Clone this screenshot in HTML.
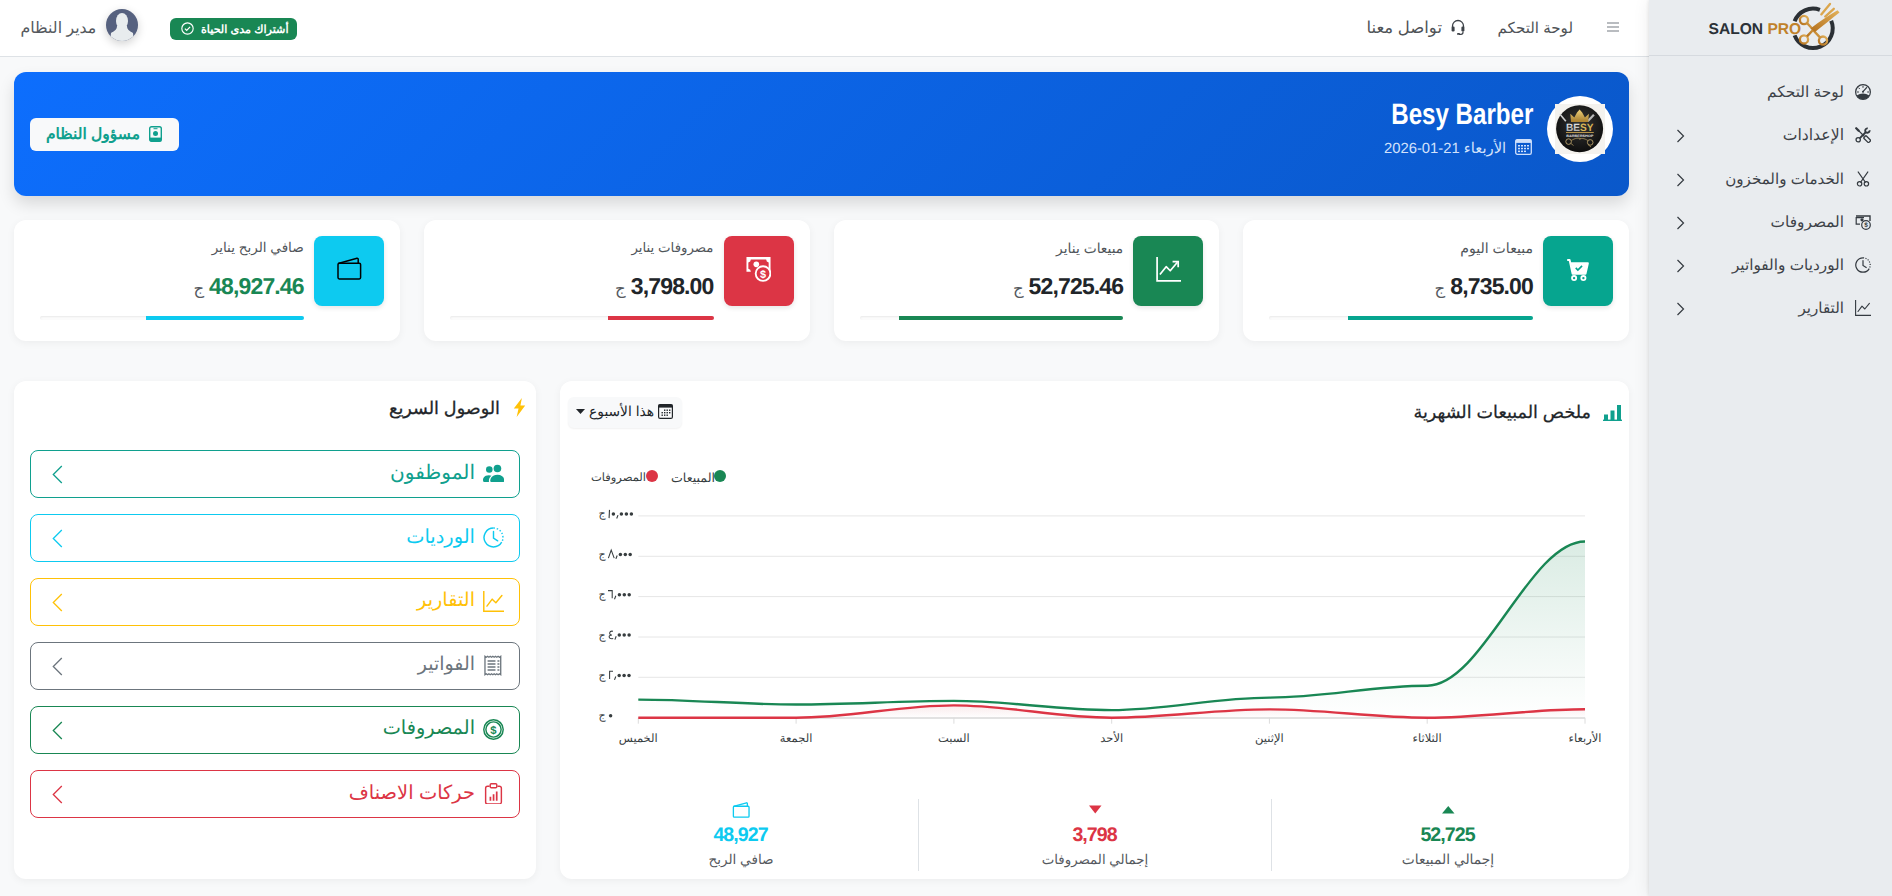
<!DOCTYPE html>
<html lang="ar" dir="rtl">
<head>
<meta charset="utf-8">
<title>Salon Pro</title>
<style>
*{box-sizing:border-box;margin:0;padding:0}
html,body{width:1892px;height:896px;overflow:hidden}
body{font-family:"Liberation Sans",sans-serif;text-rendering:geometricPrecision;background:#f8f9fa;color:#212529;position:relative}
.abs{position:absolute}
.nw{white-space:nowrap}
svg{display:block}
/* sidebar */
#sidebar{position:absolute;left:1649px;top:0;width:243px;height:896px;background:#e9ecef;box-shadow:-1px 0 3px rgba(0,0,0,.07),0 0 16px rgba(0,0,0,.08);z-index:5}
#sidebar .logo{position:absolute;left:0;top:0;width:243px;height:56px;border-bottom:1px solid #d6dadf}
.mi{position:absolute;left:0;width:243px;height:30px}
.mi .t{position:absolute;right:48px;top:6px;font-size:15px;color:#3d4248;white-space:nowrap;line-height:20px}
.mi .ic{position:absolute;right:21px;top:7px;width:16px;height:16px}
.mi .ch{position:absolute;left:27px;top:9px;width:9px;height:14px}
/* header */
#header{position:absolute;left:0;top:0;width:1649px;height:57px;background:#fff;border-bottom:1px solid #dee2e6}
/* banner */
#banner{position:absolute;left:14px;top:72px;width:1615px;height:124px;border-radius:12px;background:linear-gradient(135deg,#0d6efd 0%,#0a58ca 100%);box-shadow:0 8px 16px rgba(0,0,0,.13)}
/* cards */
.card{position:absolute;background:#fff;border-radius:12px;box-shadow:0 2px 8px rgba(0,0,0,.05)}
.stat{top:220px;width:385.75px;height:121px}
.stat .box{position:absolute;right:16px;top:16px;width:70px;height:70px;border-radius:8px;box-shadow:0 2px 5px rgba(0,0,0,.1)}
.stat .ttl{position:absolute;right:97px;top:236px;font-size:13.7px;color:#4a4f55;white-space:nowrap}
.stat .val{position:absolute;right:96px;top:54px;font-size:21.5px;font-weight:700;white-space:nowrap;line-height:26px}
.stat .cur{font-size:14px;font-weight:400;color:#555}
.stat .track{position:absolute;left:26px;right:96px;top:96px;height:4px;border-radius:4px;background:#fbfbfb;box-shadow:inset 0 1px 2px rgba(0,0,0,.07);overflow:hidden}
.stat .fill{position:absolute;right:0;top:0;height:4px}
/* quick */
.qb{position:absolute;left:16px;width:490px;height:48px;border:1px solid;border-radius:8px;background:#fff}
.qb .t{position:absolute;right:44px;top:10px;font-size:19px;white-space:nowrap;line-height:24px}
.qb .ic{position:absolute;right:15px;top:12px;width:21px;height:21px}
.qb .ch{position:absolute;left:21px;top:14px;width:11px;height:19px}
.xl{top:349px;width:80px;text-align:center;font-size:11.5px;line-height:18px;color:#373d3f}
.yl{left:38.5px;font-size:11px;line-height:18px;color:#373d3f}
.lg{top:87.5px;line-height:18px;color:#373d3f}
.sumv{top:443px;width:200px;text-align:center;font-size:19.6px;letter-spacing:-.95px;text-indent:-.95px;font-weight:700;line-height:22px;direction:ltr}
.suml{top:469px;width:200px;text-align:center;line-height:20px;color:#55595e;white-space:nowrap}
</style>
</head>
<body>

<!-- HEADER -->
<div id="header">
  <!-- hamburger -->
  <svg class="abs" style="left:1607px;top:21px" width="12" height="12" viewBox="0 0 12 12"><rect x="0" y="1" width="12" height="2" fill="#b9bcc0"/><rect x="0" y="5" width="12" height="2" fill="#b9bcc0"/><rect x="0" y="9" width="12" height="2" fill="#b9bcc0"/></svg>
  <span class="abs nw" id="h-dash" style="right:76px;top:19px;font-size:15.1px;line-height:20px;color:#4f5357">لوحة التحكم</span>
  <!-- headset -->
  <svg class="abs" style="left:1451px;top:19px" width="14" height="16" viewBox="0 0 14 16"><path d="M1.5 8.5V7a5.5 5.5 0 0 1 11 0v1.5" fill="none" stroke="#3d4248" stroke-width="1.3"/><rect x="0.6" y="7.5" width="3" height="5" rx="1.2" fill="#3d4248"/><rect x="10.4" y="7.5" width="3" height="5" rx="1.2" fill="#3d4248"/><path d="M12 12.5v0.8a2 2 0 0 1-2 2H8" fill="none" stroke="#3d4248" stroke-width="1.2"/><rect x="6" y="14" width="3" height="1.8" rx=".9" fill="#3d4248"/></svg>
  <span class="abs nw" id="h-contact" style="right:207px;top:17.5px;font-size:16.5px;line-height:20px;color:#4f5357">تواصل معنا</span>
  <!-- badge -->
  <div class="abs" style="left:170px;top:18px;width:127px;height:22px;background:#198754;border-radius:6px"></div>
  <span class="abs nw" style="left:201px;top:20px;font-size:11.2px;font-weight:700;line-height:20px;color:#fff">أشتراك مدى الحياة</span>
  <svg class="abs" style="left:181px;top:22px" width="13" height="13" viewBox="0 0 16 16"><circle cx="8" cy="8" r="7" fill="none" stroke="#fff" stroke-width="1.4"/><path d="M4.8 8.2l2.2 2.2 4.2-4.5" fill="none" stroke="#fff" stroke-width="1.5"/></svg>
  <!-- avatar -->
  <div class="abs" style="left:106px;top:9px;width:32px;height:32px;border-radius:50%;background:#56617f;box-shadow:0 3px 10px rgba(0,0,0,.18);overflow:hidden">
    <svg width="32" height="32" viewBox="0 0 32 32"><ellipse cx="16" cy="12" rx="6" ry="8" fill="#e8ecee"/><path d="M11 17 C11 21 8 22 5 24 L4 33 L28 33 L27 24 C24 22 21 21 21 17 Z" fill="#e8ecee"/></svg>
  </div>
  <span class="abs nw" style="left:20.5px;top:19px;font-size:15.8px;line-height:20px;color:#55595e">مدير النظام</span>
</div>

<!-- SIDEBAR -->
<div id="sidebar">
  <div class="logo">
    <span class="abs nw" style="left:59.5px;top:20.5px;font-size:15.6px;font-weight:700;line-height:18px;color:#2b3137;direction:ltr">SALON <span style="color:#c0812a">PRO</span></span>
    <svg class="abs" style="left:130px;top:0px" width="70" height="56" viewBox="0 0 70 56">
      <defs><linearGradient id="gold" x1="0" y1="1" x2="1" y2="0"><stop offset="0" stop-color="#b36f1c"/><stop offset="1" stop-color="#e3b35c"/></linearGradient></defs>
      <path d="M15.61 21.24A19.7 19.7 0 0 1 40.9 9.85" fill="none" stroke="#2b3035" stroke-width="4"/>
      <path d="M52.2 20.76A19.7 19.7 0 1 1 15.61 35.36" fill="none" stroke="#2b3035" stroke-width="4"/>
      <circle cx="25" cy="20" r="4.1" fill="none" stroke="url(#gold)" stroke-width="2.3"/>
      <circle cx="25" cy="39.4" r="4.1" fill="none" stroke="url(#gold)" stroke-width="2.3"/>
      <circle cx="44" cy="40.6" r="4.1" fill="none" stroke="url(#gold)" stroke-width="2.3"/>
      <path d="M28 23L34 29.5M28 36.4L34 30M41.2 37.6L34 30" stroke="url(#gold)" stroke-width="2.4"/>
      <path d="M31.5 28.5C40 22 50 15 58.5 10.2L60.5 12.5C52 19 43 26.5 36 32Z" fill="url(#gold)"/>
      <path d="M42.3 14.4L51 3.9M46.2 16.6L54.8 8.8" stroke="#dba64c" stroke-width="2.3" stroke-linecap="round"/>
    </svg>
  </div>
  <div class="mi" style="top:77px"><svg class="ic" viewBox="0 0 16 16"><circle cx="8" cy="8" r="7.4" fill="none" stroke="#343a40" stroke-width="1.2"/><path d="M1.6 11.6A12 12 0 0 1 14.4 11.6A7.4 7.4 0 0 1 1.6 11.6Z" fill="#343a40"/><path d="M8 7.6L11.6 3.6" stroke="#343a40" stroke-width="1.3" stroke-linecap="round"/><circle cx="8" cy="7.8" r="1" fill="#343a40"/><path d="M8 2.2v1.2M3.7 3.9l.8.8M2.2 8h1.3M12.6 8h1.2" stroke="#343a40" stroke-width="1" stroke-linecap="round"/></svg><span class="t" style="font-size:15.4px">لوحة التحكم</span></div>
  <div class="mi" style="top:120px"><svg class="ic" viewBox="0 0 16 16"><path d="M1.2 1.2L3.6 3.6" stroke="#343a40" stroke-width="2.2" stroke-linecap="round"/><path d="M3.4 3.4L9.2 9.2" stroke="#343a40" stroke-width="1.3"/><g transform="rotate(45 12.2 12.2)"><rect x="8.7" y="10.5" width="7" height="3.4" rx=".7" fill="none" stroke="#343a40" stroke-width="1.3"/></g><path d="M4.6 11.4L11 5" stroke="#343a40" stroke-width="1.9"/><circle cx="3.2" cy="12.8" r="2.15" fill="none" stroke="#343a40" stroke-width="1.3"/><path d="M14.57 3.22A2.2 2.2 0 1 1 12.78 1.43" fill="none" stroke="#343a40" stroke-width="1.9"/></svg><span class="t" style="font-size:15.7px">الإعدادات</span><svg class="ch" viewBox="0 0 9 14"><path d="M1.5 1l6 6-6 6" fill="none" stroke="#343a40" stroke-width="1.2"/></svg></div>
  <div class="mi" style="top:163.5px"><svg class="ic" viewBox="0 0 16 16"><circle cx="4.6" cy="12.8" r="2.2" fill="none" stroke="#343a40" stroke-width="1.2"/><circle cx="11.4" cy="12.8" r="2.2" fill="none" stroke="#343a40" stroke-width="1.2"/><path d="M5.8 11L12.8 1M10.2 11L3.2 1" stroke="#343a40" stroke-width="1.3" stroke-linecap="round"/></svg><span class="t" style="font-size:15.1px">الخدمات والمخزون</span><svg class="ch" viewBox="0 0 9 14"><path d="M1.5 1l6 6-6 6" fill="none" stroke="#343a40" stroke-width="1.2"/></svg></div>
  <div class="mi" style="top:207px"><svg class="ic" viewBox="0 0 16 16"><path d="M9 3.6H1.2v6.6H5" fill="none" stroke="#343a40" stroke-width="1.2"/><path d="M1 2h14v5" fill="none" stroke="#343a40" stroke-width="1.4"/><circle cx="7" cy="5.8" r="1.6" fill="#343a40"/><circle cx="11" cy="11" r="4.3" fill="none" stroke="#343a40" stroke-width="1.2"/><text x="11" y="13.4" font-size="6.5" text-anchor="middle" fill="#343a40" font-family="Liberation Sans" font-weight="700">$</text></svg><span class="t" style="font-size:15.35px">المصروفات</span><svg class="ch" viewBox="0 0 9 14"><path d="M1.5 1l6 6-6 6" fill="none" stroke="#343a40" stroke-width="1.2"/></svg></div>
  <div class="mi" style="top:250px"><svg class="ic" viewBox="0 0 16 16"><path d="M14.24 11.6A7.2 7.2 0 1 1 8 .8" fill="none" stroke="#343a40" stroke-width="1.2"/><path d="M8 .8A7.2 7.2 0 0 1 14.24 11.6" fill="none" stroke="#343a40" stroke-width="1.2" stroke-dasharray="1.1 1.4"/><path d="M8 3.5v5l3.2 2" fill="none" stroke="#343a40" stroke-width="1.2" stroke-linecap="round"/></svg><span class="t" style="font-size:15.3px">الورديات والفواتير</span><svg class="ch" viewBox="0 0 9 14"><path d="M1.5 1l6 6-6 6" fill="none" stroke="#343a40" stroke-width="1.2"/></svg></div>
  <div class="mi" style="top:293px"><svg class="ic" viewBox="0 0 16 16"><path d="M.6 0v15.4H16" fill="none" stroke="#343a40" stroke-width="1.1"/><path d="M3 11.5l4-5.3 2.8 2.8 4.6-5.6" fill="none" stroke="#343a40" stroke-width="1.1" stroke-linejoin="round" stroke-linecap="round"/></svg><span class="t" style="font-size:15.15px">التقارير</span><svg class="ch" viewBox="0 0 9 14"><path d="M1.5 1l6 6-6 6" fill="none" stroke="#343a40" stroke-width="1.2"/></svg></div>
</div>

<!-- BANNER -->
<div id="banner">
  <!-- logo circle -->
  <div class="abs" style="left:1533px;top:24px;width:66px;height:66px;border-radius:50%;background:#fff"></div>
  <svg class="abs" style="left:1541px;top:32px" width="50" height="50" viewBox="0 0 50 50">
    <defs><radialGradient id="bk" cx=".5" cy=".4" r=".6"><stop offset="0" stop-color="#353535"/><stop offset="1" stop-color="#0e0e0e"/></radialGradient>
    <linearGradient id="gd" x1="0" y1="0" x2="0" y2="1"><stop offset="0" stop-color="#f0d27a"/><stop offset="1" stop-color="#a57c2e"/></linearGradient>
    <linearGradient id="sv" x1="0" y1="0" x2="0" y2="1"><stop offset="0" stop-color="#f2f2f2"/><stop offset="1" stop-color="#9a9a9a"/></linearGradient></defs>
    <rect x="0" y="0" width="50" height="50" fill="#f4f2ee"/>
    <circle cx="24.6" cy="24.8" r="23.5" fill="url(#bk)"/>
    <path d="M5 10.3L10.8 17.3" stroke="#d0d0d0" stroke-width="1.6"/>
    <path d="M38.9 10.7L32.7 17.3" stroke="#b8b8b8" stroke-width="2.2"/>
    <path d="M16 17.8L15.3 9.8 19.3 13.5 22 8.4 24.6 5.6 27.2 8.4 29.9 13.5 33.9 9.8 33.2 17.8Z" fill="url(#gd)"/>
    <rect x="16" y="16.3" width="17.2" height="1.6" fill="#b58a35"/>
    <text x="24.8" y="26.8" font-family="Liberation Sans" font-weight="700" font-size="10.6" text-anchor="middle" fill="url(#sv)" textLength="27.5" lengthAdjust="spacingAndGlyphs">BE<tspan fill="#d8b457">SY</tspan></text>
    <rect x="11" y="28" width="27.8" height=".9" fill="#c9a24f"/>
    <text x="24.8" y="32.8" font-family="Liberation Sans" font-weight="700" font-size="3.4" text-anchor="middle" fill="#e4e4e4" textLength="27" lengthAdjust="spacingAndGlyphs">BARBERSHOP</text>
    <circle cx="13.6" cy="37.6" r="2.8" fill="none" stroke="#b9a06a" stroke-width=".9"/>
    <circle cx="35.2" cy="38.4" r="2.8" fill="none" stroke="#b9a06a" stroke-width=".9"/>
    <path d="M16.2 36.6C20 34 24 33.5 26 35M33 36.6C29 34 26 34 24 35.5M16 39.5l2.5 2M33 40.5l3 2.5" fill="none" stroke="#a8925e" stroke-width=".8"/>
  </svg>
  <span class="abs nw" id="bname" style="right:96px;top:27.5px;font-size:29.6px;font-weight:700;line-height:30px;color:#fff;direction:ltr;display:inline-block;transform:scaleX(.815);transform-origin:100% 50%">Besy Barber</span>
  <!-- calendar icon -->
  <svg class="abs" style="left:1501px;top:67px" width="17" height="16" viewBox="0 0 17 16"><rect x=".7" y=".7" width="15.6" height="14.6" rx="1.6" fill="none" stroke="#cfe0fb" stroke-width="1.3"/><rect x=".7" y=".7" width="15.6" height="3.2" fill="#cfe0fb"/><g fill="#cfe0fb"><rect x="3" y="6" width="2" height="1.5"/><rect x="6" y="6" width="2" height="1.5"/><rect x="9" y="6" width="2" height="1.5"/><rect x="12" y="6" width="2" height="1.5"/><rect x="3" y="8.8" width="2" height="1.5"/><rect x="6" y="8.8" width="2" height="1.5"/><rect x="9" y="8.8" width="2" height="1.5"/><rect x="12" y="8.8" width="2" height="1.5"/><rect x="3" y="11.6" width="2" height="1.5"/><rect x="6" y="11.6" width="2" height="1.5"/><rect x="9" y="11.6" width="2" height="1.5"/></g></svg>
  <span class="abs nw" id="bdate" style="left:1370px;top:67px;font-size:14.8px;line-height:20px;color:#d3e2fb">الأربعاء <span style="direction:ltr;unicode-bidi:isolate">2026-01-21</span></span>
  <!-- button -->
  <div class="abs" style="left:16px;top:46px;width:149px;height:33px;border-radius:6px;background:#f8f9fa"></div>
  <span class="abs nw" id="bbtn" style="left:32px;top:52.5px;font-size:15.5px;font-weight:700;line-height:20px;color:#10a08e">مسؤول النظام</span>
  <svg class="abs" style="left:135px;top:54px" width="13" height="16" viewBox="0 0 13 16"><rect x=".7" y=".7" width="11.6" height="14.6" rx="1.8" fill="none" stroke="#10a08e" stroke-width="1.4"/><circle cx="6.5" cy="7.4" r="2.5" fill="#10a08e"/><path d="M1 11.6h11v3.7H1z" fill="#10a08e"/><rect x="4.5" y="2.2" width="4" height="1" fill="#10a08e"/></svg>
</div>

<!-- STAT CARDS -->
<div class="card stat" style="left:1243.25px">
  <div class="box" style="background:#06a58f"><svg class="abs" style="left:23px;top:22px" width="24" height="24" viewBox="0 0 16 16"><path d="M.8 1.3h1.6l2 9.2h8.6l1.6-7H3.3" fill="none" stroke="#fff" stroke-width="1.3" stroke-linejoin="round"/><path d="M3.2 3.5h11.4l-1.6 7H4.5z" fill="#fff"/><path d="M6.5 6.6l1.4 1.4 2.8-2.8" fill="none" stroke="#06a58f" stroke-width="1.1"/><circle cx="5.4" cy="13.4" r="1.4" fill="none" stroke="#fff" stroke-width="1.2"/><circle cx="11.6" cy="13.4" r="1.4" fill="none" stroke="#fff" stroke-width="1.2"/></svg></div>
  <span class="abs nw" style="right:96px;top:18px;font-size:14.08px;line-height:20px;color:#50555a">مبيعات اليوم</span>
  <div class="abs nw" style="right:96px;top:53px;display:flex;align-items:baseline;gap:5px;line-height:26px"><div style="direction:ltr;font-size:23px;letter-spacing:-.85px;font-weight:700;color:#212529">8,735.00</div><div style="font-size:16.5px;color:#55595e">ج</div></div>
  <div class="track"><div class="fill" style="width:70%;background:#06a58f"></div></div>
</div>
<div class="card stat" style="left:833.5px">
  <div class="box" style="background:#198754"><svg class="abs" style="left:23px;top:21px" width="25" height="25" viewBox="0 0 16 16"><path d="M.7 0v15.3H16" fill="none" stroke="#fff" stroke-width="1.1"/><path d="M2.5 11.2l4-5 2.6 2.6 4.6-5.4" fill="none" stroke="#fff" stroke-width="1.1" stroke-linejoin="round"/><path d="M10.6 3h3.6v3.6" fill="none" stroke="#fff" stroke-width="1.1"/></svg></div>
  <span class="abs nw" style="right:96px;top:18px;font-size:13.82px;line-height:20px;color:#50555a">مبيعات يناير</span>
  <div class="abs nw" style="right:96px;top:53px;display:flex;align-items:baseline;gap:5px;line-height:26px"><div style="direction:ltr;font-size:23px;letter-spacing:-.85px;font-weight:700;color:#212529">52,725.46</div><div style="font-size:16.5px;color:#55595e">ج</div></div>
  <div class="track"><div class="fill" style="width:85%;background:#198754"></div></div>
</div>
<div class="card stat" style="left:423.75px">
  <div class="box" style="background:#dc3545"><svg class="abs" style="left:22px;top:21px" width="25" height="25" viewBox="0 0 16 16"><path d="M.3 0h15.4v9.2h-5.2A4.8 4.8 0 0 0 5.9 9.5H.3z" fill="#fff"/><path d="M1.5 3.5a2 2 0 0 0 1.6-1.9h9.8a2 2 0 0 0 1.6 1.9v4.6a2 2 0 0 0-1.6 1.5H3.1A2 2 0 0 0 1.5 7.5z" fill="#dc3545"/><circle cx="6.6" cy="4.7" r="1.8" fill="#fff"/><circle cx="10.9" cy="10.6" r="4.7" fill="#dc3545" stroke="#fff" stroke-width="1.2"/><text x="10.9" y="13.2" text-anchor="middle" font-family="Liberation Sans" font-weight="700" font-size="7" fill="#fff">$</text></svg></div>
  <span class="abs nw" style="right:96px;top:18px;font-size:13.34px;line-height:20px;color:#50555a">مصروفات يناير</span>
  <div class="abs nw" style="right:96px;top:53px;display:flex;align-items:baseline;gap:5px;line-height:26px"><div style="direction:ltr;font-size:23px;letter-spacing:-.85px;font-weight:700;color:#212529">3,798.00</div><div style="font-size:16.5px;color:#55595e">ج</div></div>
  <div class="track"><div class="fill" style="width:40%;background:#dc3545"></div></div>
</div>
<div class="card stat" style="left:14px">
  <div class="box" style="background:#0dcaf0"><svg class="abs" style="left:22px;top:20px" width="26" height="24" viewBox="0 0 26 24"><rect x="2" y="7.3" width="22.6" height="15.6" rx="1.3" fill="none" stroke="#000" stroke-width="1.5"/><path d="M2.2 7.5L21 2.3a1 1 0 0 1 1.2 1v4" fill="none" stroke="#000" stroke-width="1.5" stroke-linejoin="round"/></svg></div>
  <span class="abs nw" style="right:96px;top:18px;font-size:13.56px;line-height:20px;color:#50555a">صافي الربح يناير</span>
  <div class="abs nw" style="right:96px;top:53px;display:flex;align-items:baseline;gap:5px;line-height:26px"><div style="direction:ltr;font-size:23px;letter-spacing:-.85px;font-weight:700;color:#198754">48,927.46</div><div style="font-size:16.5px;color:#55595e">ج</div></div>
  <div class="track"><div class="fill" style="width:60%;background:#0dcaf0"></div></div>
</div>

<!-- QUICK ACCESS -->
<div class="card" id="quick" style="left:14px;top:381px;width:522px;height:498px">
  <svg class="abs" style="left:498px;top:17px" width="15" height="19" viewBox="1 0 14 20"><path d="M10.5 0L2 11h5l-2 9 9-12H9z" fill="#ffc107"/></svg>
  <span class="abs nw" style="right:36px;top:15.5px;font-size:17.6px;line-height:22px;color:#212529;-webkit-text-stroke:.3px #212529">الوصول السريع</span>
  <div class="qb" style="top:69px;border-color:#10a08e"><svg class="ic" viewBox="0 0 16 16"><circle cx="11" cy="4.2" r="2.9" fill="#10a08e"/><circle cx="4.8" cy="4.9" r="2.5" fill="#10a08e"/><path d="M6.5 14.5s-1 0-1-1 1-4.5 5.5-4.5 5.5 3.5 5.5 4.5-1 1-1 1z" fill="#10a08e"/><path d="M4.6 14.5A2.2 2.2 0 0 1 4.5 13.5c0-1.4.7-2.8 2-3.8A6.5 6.5 0 0 0 4.5 9.4c-4 0-4.5 2.6-4.5 3.7 0 1 .6 1.4 1.2 1.4z" fill="#10a08e"/></svg><span class="t" style="font-size:20.1px;color:#10a08e">الموظفون</span><svg class="ch" viewBox="0 0 11 19"><path d="M9.8 1L1.3 9.5l8.5 8.5" fill="none" stroke="#10a08e" stroke-width="1.3"/></svg></div>
  <div class="qb" style="top:133px;border-color:#0dcaf0"><svg class="ic" viewBox="0 0 16 16"><path d="M14.24 11.6A7.2 7.2 0 1 1 8 .8" fill="none" stroke="#0dcaf0" stroke-width="1.1"/><path d="M8 .8A7.2 7.2 0 0 1 14.24 11.6" fill="none" stroke="#0dcaf0" stroke-width="1.1" stroke-dasharray="1.1 1.4"/><path d="M8 3.5v5l3.2 2" fill="none" stroke="#0dcaf0" stroke-width="1.1" stroke-linecap="round"/></svg><span class="t" style="font-size:19.4px;color:#0dcaf0">الورديات</span><svg class="ch" viewBox="0 0 11 19"><path d="M9.8 1L1.3 9.5l8.5 8.5" fill="none" stroke="#0dcaf0" stroke-width="1.3"/></svg></div>
  <div class="qb" style="top:197px;border-color:#ffc107"><svg class="ic" viewBox="0 0 16 16"><path d="M.6 0v15.4H16" fill="none" stroke="#ffc107" stroke-width="1.1"/><path d="M3 11.5l4-5.3 2.8 2.8 4.6-5.6" fill="none" stroke="#ffc107" stroke-width="1.1" stroke-linejoin="round" stroke-linecap="round"/></svg><span class="t" style="font-size:19.26px;color:#ffc107">التقارير</span><svg class="ch" viewBox="0 0 11 19"><path d="M9.8 1L1.3 9.5l8.5 8.5" fill="none" stroke="#ffc107" stroke-width="1.3"/></svg></div>
  <div class="qb" style="top:261px;border-color:#6c757d"><svg class="ic" viewBox="0 0 16 16"><path d="M1.5 1l1 .7 1-.7 1 .7 1-.7 1 .7 1-.7 1 .7 1-.7 1 .7 1-.7 1 .7 1-.7V15l-1-.7-1 .7-1-.7-1 .7-1-.7-1 .7-1-.7-1 .7-1-.7-1 .7-1-.7-1 .7z" fill="none" stroke="#6c757d" stroke-width="1"/><path d="M3.5 4.5h6M3.5 6.8h6M3.5 9.1h6M3.5 11.4h6M11 4.5h1.5M11 6.8h1.5M11 9.1h1.5M11 11.4h1.5" stroke="#6c757d" stroke-width="1.1"/></svg><span class="t" style="font-size:19.0px;color:#6c757d">الفواتير</span><svg class="ch" viewBox="0 0 11 19"><path d="M9.8 1L1.3 9.5l8.5 8.5" fill="none" stroke="#6c757d" stroke-width="1.3"/></svg></div>
  <div class="qb" style="top:325px;border-color:#198754"><svg class="ic" viewBox="0 0 16 16"><circle cx="8" cy="8" r="7.4" fill="none" stroke="#198754" stroke-width="1.1"/><circle cx="8" cy="8" r="5.8" fill="none" stroke="#198754" stroke-width="1.1"/><text x="8" y="11.2" text-anchor="middle" font-family="Liberation Sans" font-weight="700" font-size="8.6" fill="#198754">$</text></svg><span class="t" style="font-size:19.3px;color:#198754">المصروفات</span><svg class="ch" viewBox="0 0 11 19"><path d="M9.8 1L1.3 9.5l8.5 8.5" fill="none" stroke="#198754" stroke-width="1.3"/></svg></div>
  <div class="qb" style="top:389px;border-color:#dc3545"><svg class="ic" viewBox="0 0 16 16"><path d="M5 2.5H3.5a1.5 1.5 0 0 0-1.5 1.5v10.5A1.5 1.5 0 0 0 3.5 16h9a1.5 1.5 0 0 0 1.5-1.5V4a1.5 1.5 0 0 0-1.5-1.5H11" fill="none" stroke="#dc3545" stroke-width="1.1"/><rect x="5.5" y=".6" width="5" height="3" rx=".8" fill="none" stroke="#dc3545" stroke-width="1.1"/><path d="M5 10.5h1.3v3H5zM7.4 8.5h1.3v5H7.4zM9.8 6.5h1.3v7H9.8z" fill="#dc3545"/></svg><span class="t" style="font-size:19.4px;color:#dc3545">حركات الاصناف</span><svg class="ch" viewBox="0 0 11 19"><path d="M9.8 1L1.3 9.5l8.5 8.5" fill="none" stroke="#dc3545" stroke-width="1.3"/></svg></div>
</div>

<!-- CHART -->
<div class="card" id="chart" style="left:560px;top:381px;width:1069px;height:498px">
  <svg class="abs" style="left:1043px;top:23px" width="19" height="17" viewBox="0 0 19 17"><rect x="1" y="10.5" width="4" height="5.5" fill="#10a08e"/><rect x="7.5" y="6.5" width="4" height="9.5" fill="#10a08e"/><rect x="14" y="1" width="4" height="15" fill="#10a08e"/><rect x="0" y="15.6" width="19" height="1.4" fill="#10a08e"/></svg>
  <span class="abs nw" id="ctitle" style="right:38px;top:19.5px;font-size:17.6px;line-height:22px;color:#212529;-webkit-text-stroke:.25px #212529">ملخص المبيعات الشهرية</span>
  <div class="abs" style="left:8px;top:16px;width:114px;height:31px;border-radius:6px;background:#f8f9fa;box-shadow:0 1px 2px rgba(0,0,0,.06)"></div>
  <svg class="abs" style="left:16px;top:28px" width="9" height="5" viewBox="0 0 9 5"><path d="M0 0h9L4.5 5z" fill="#212529"/></svg>
  <span class="abs nw" style="right:975px;top:21px;font-size:13.8px;line-height:20px;color:#212529">هذا الأسبوع</span>
  <svg class="abs" style="left:98px;top:23px" width="15" height="15" viewBox="0 0 15 15"><rect x=".6" y=".6" width="13.8" height="13.8" rx="1.5" fill="none" stroke="#212529" stroke-width="1.2"/><rect x=".6" y=".6" width="13.8" height="3" fill="#212529"/><g fill="#212529"><rect x="6" y="5.5" width="1.4" height="1.4"/><rect x="8.5" y="5.5" width="1.4" height="1.4"/><rect x="11" y="5.5" width="1.4" height="1.4"/><rect x="3.5" y="8" width="1.4" height="1.4"/><rect x="6" y="8" width="1.4" height="1.4"/><rect x="8.5" y="8" width="1.4" height="1.4"/><rect x="11" y="8" width="1.4" height="1.4"/><rect x="3.5" y="10.5" width="1.4" height="1.4"/><rect x="6" y="10.5" width="1.4" height="1.4"/><rect x="8.5" y="10.5" width="1.4" height="1.4"/></g></svg>
  <!-- legend -->
  <div class="abs" style="left:154px;top:89px;width:12px;height:12px;border-radius:50%;background:#198754"></div>
  <span class="abs nw lg" style="right:914px;font-size:12.6px">المبيعات</span>
  <div class="abs" style="left:86px;top:89px;width:12px;height:12px;border-radius:50%;background:#dc3545"></div>
  <span class="abs nw lg" style="right:983px;font-size:11.5px">المصروفات</span>
  <span class="abs nw yl" style="top:124.4px">ج</span><span class="abs nw yl" style="top:164.8px">ج</span><span class="abs nw yl" style="top:205.1px">ج</span><span class="abs nw yl" style="top:245.5px">ج</span><span class="abs nw yl" style="top:285.8px">ج</span><span class="abs nw yl" style="top:326.2px">ج</span>
  <span class="abs nw xl" style="left:38.3px">الخميس</span><span class="abs nw xl" style="left:196.1px">الجمعة</span><span class="abs nw xl" style="left:353.9px">السبت</span><span class="abs nw xl" style="left:511.7px">الأحد</span><span class="abs nw xl" style="left:669.4px">الإثنين</span><span class="abs nw xl" style="left:827.2px">الثلاثاء</span><span class="abs nw xl" style="left:985.0px">الأربعاء</span>
  <!-- summary -->
  <div class="abs" style="left:358px;top:418px;width:1px;height:72px;background:#dee2e6"></div>
  <div class="abs" style="left:711px;top:418px;width:1px;height:72px;background:#dee2e6"></div>
  <svg class="abs" style="left:172px;top:420px" width="18" height="17" viewBox="0 0 26 24"><rect x="2" y="7.3" width="22.6" height="15.6" rx="1.3" fill="none" stroke="#0dcaf0" stroke-width="1.9"/><path d="M2.2 7.5L21 2.3a1 1 0 0 1 1.2 1v4" fill="none" stroke="#0dcaf0" stroke-width="1.9" stroke-linejoin="round"/></svg>
  <svg class="abs" style="left:529px;top:424px" width="13" height="9" viewBox="0 0 13 9"><path d="M0 .5h12.5L6.25 8.5z" fill="#dc3545"/></svg>
  <svg class="abs" style="left:882px;top:425px" width="13" height="8" viewBox="0 0 13 8"><path d="M0 7.5h12.5L6.25 0z" fill="#198754"/></svg>
  <div class="abs sumv" style="left:81px;color:#0dcaf0">48,927</div>
  <div class="abs sumv" style="left:435px;color:#dc3545">3,798</div>
  <div class="abs sumv" style="left:788px;color:#198754">52,725</div>
  <div class="abs suml" style="left:81px;font-size:13.55px">صافي الربح</div>
  <div class="abs suml" style="left:435px;font-size:13.37px">إجمالي المصروفات</div>
  <div class="abs suml" style="left:788px;font-size:13.8px">إجمالي المبيعات</div>
</div>
<svg class="abs" style="left:0;top:0;z-index:2;pointer-events:none" width="1649" height="896" viewBox="0 0 1649 896">
  <defs>
    <linearGradient id="gg" x1="0" y1="541" x2="0" y2="718" gradientUnits="userSpaceOnUse"><stop offset="0" stop-color="#198754" stop-opacity=".16"/><stop offset="1" stop-color="#198754" stop-opacity="0"/></linearGradient>
    <linearGradient id="rg" x1="0" y1="705" x2="0" y2="718" gradientUnits="userSpaceOnUse"><stop offset="0" stop-color="#dc3545" stop-opacity=".10"/><stop offset="1" stop-color="#dc3545" stop-opacity="0"/></linearGradient>
  </defs>
  <path d="M638.3 515.9H1585.0" stroke="#e6e6e6" stroke-width="1"/><path d="M638.3 556.3H1585.0" stroke="#e6e6e6" stroke-width="1"/><path d="M638.3 596.6H1585.0" stroke="#e6e6e6" stroke-width="1"/><path d="M638.3 637.0H1585.0" stroke="#e6e6e6" stroke-width="1"/><path d="M638.3 677.3H1585.0" stroke="#e6e6e6" stroke-width="1"/>
  <path d="M638.3 718.0H1585.0" stroke="#d9d9d9" stroke-width="1.4"/>
  <path d="M638.3 717.7V723.7" stroke="#dcdcdc" stroke-width="1"/><path d="M796.1 717.7V723.7" stroke="#dcdcdc" stroke-width="1"/><path d="M953.9 717.7V723.7" stroke="#dcdcdc" stroke-width="1"/><path d="M1111.7 717.7V723.7" stroke="#dcdcdc" stroke-width="1"/><path d="M1269.4 717.7V723.7" stroke="#dcdcdc" stroke-width="1"/><path d="M1427.2 717.7V723.7" stroke="#dcdcdc" stroke-width="1"/><path d="M1585.0 717.7V723.7" stroke="#dcdcdc" stroke-width="1"/>
  <path d="M638.30 699.60C693.52 699.60 740.86 704.50 796.08 704.50C851.31 704.50 898.64 700.91 953.87 700.91C1009.09 700.91 1056.43 710.09 1111.65 710.09C1166.87 710.09 1214.21 697.60 1269.43 697.60C1324.66 697.60 1371.99 685.71 1427.22 685.71C1482.44 685.71 1529.78 541.43 1585.00 541.43L1585.00 717.70L638.30 717.70Z" fill="url(#gg)"/>
  <path d="M638.30 717.70C693.52 717.70 740.86 717.70 796.08 717.70C851.31 717.70 898.64 705.35 953.87 705.35C1009.09 705.35 1056.43 717.70 1111.65 717.70C1166.87 717.70 1214.21 709.35 1269.43 709.35C1324.66 709.35 1371.99 717.70 1427.22 717.70C1482.44 717.70 1529.78 709.26 1585.00 709.26L1585.00 717.70L638.30 717.70Z" fill="url(#rg)"/>
  <path d="M638.30 699.60C693.52 699.60 740.86 704.50 796.08 704.50C851.31 704.50 898.64 700.91 953.87 700.91C1009.09 700.91 1056.43 710.09 1111.65 710.09C1166.87 710.09 1214.21 697.60 1269.43 697.60C1324.66 697.60 1371.99 685.71 1427.22 685.71C1482.44 685.71 1529.78 541.43 1585.00 541.43" fill="none" stroke="#198754" stroke-width="2.4"/>
  <path d="M638.30 717.70C693.52 717.70 740.86 717.70 796.08 717.70C851.31 717.70 898.64 705.35 953.87 705.35C1009.09 705.35 1056.43 717.70 1111.65 717.70C1166.87 717.70 1214.21 709.35 1269.43 709.35C1324.66 709.35 1371.99 717.70 1427.22 717.70C1482.44 717.70 1529.78 709.26 1585.00 709.26" fill="none" stroke="#dc3545" stroke-width="2.4"/>
</svg>
<svg class="abs" style="left:0;top:0;z-index:3;pointer-events:none" width="1649" height="896" viewBox="0 0 1649 896"><path d="M609.5 509.9L609.1 518.1" stroke="#373d3f" stroke-width="1.1"/><circle cx="613.4" cy="514.0" r="1.75" fill="#373d3f"/><path d="M618.0 515.1L616.7 518.5" stroke="#373d3f" stroke-width="1.1"/><circle cx="621.4" cy="514.0" r="1.75" fill="#373d3f"/><circle cx="626.4" cy="514.0" r="1.75" fill="#373d3f"/><circle cx="631.4" cy="514.0" r="1.75" fill="#373d3f"/><path d="M608.4 558.1L611.2 550.1L614.2 558.1" fill="none" stroke="#373d3f" stroke-width="1.05"/><path d="M617.2 555.5L615.9 558.9" stroke="#373d3f" stroke-width="1.1"/><circle cx="620.4" cy="554.4" r="1.75" fill="#373d3f"/><circle cx="625.3" cy="554.4" r="1.75" fill="#373d3f"/><circle cx="630.2" cy="554.4" r="1.75" fill="#373d3f"/><path d="M608 590.6H612.2V598.2" fill="none" stroke="#373d3f" stroke-width="1.05"/><path d="M615.8 595.8L614.5 599.2" stroke="#373d3f" stroke-width="1.1"/><circle cx="619.4" cy="594.7" r="1.75" fill="#373d3f"/><circle cx="624.3" cy="594.7" r="1.75" fill="#373d3f"/><circle cx="629.2" cy="594.7" r="1.75" fill="#373d3f"/><path d="M613 631.2C609 630.5 608.5 635.0 612 635.0C607.8 635.0 608.2 639.2 613.2 638.6" fill="none" stroke="#373d3f" stroke-width="1.05"/><path d="M616.2 636.2L614.9 639.6" stroke="#373d3f" stroke-width="1.1"/><circle cx="619.3" cy="635.1" r="1.75" fill="#373d3f"/><circle cx="624.2" cy="635.1" r="1.75" fill="#373d3f"/><circle cx="629.1" cy="635.1" r="1.75" fill="#373d3f"/><path d="M609.6 679.1V671.3H613" fill="none" stroke="#373d3f" stroke-width="1.05"/><path d="M615.8 676.5L614.5 679.9" stroke="#373d3f" stroke-width="1.1"/><circle cx="619.2" cy="675.4" r="1.75" fill="#373d3f"/><circle cx="624.1" cy="675.4" r="1.75" fill="#373d3f"/><circle cx="629" cy="675.4" r="1.75" fill="#373d3f"/><circle cx="610.6" cy="715.8" r="1.75" fill="#373d3f"/></svg>

</body>
</html>
